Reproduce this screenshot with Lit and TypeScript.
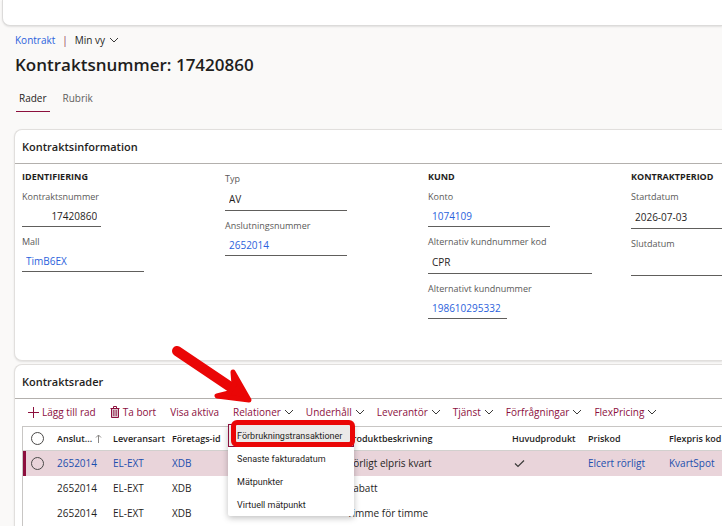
import { LitElement, html, css, nothing } from "lit";
import { customElement, state } from "lit/decorators.js";
import { classMap } from "lit/directives/class-map.js";

interface Field {
  id: string;
  label: string;
  value: string;
  kind: "text" | "link" | "number";
  size: "full" | "wide" | "short" | "rest";
}

interface Group {
  title?: string;
  fields: Field[];
}

interface Row {
  account: string;
  delivery: string;
  company: string;
  description: string;
  main: boolean;
  priceCode: string;
  flexCode: string;
}

const groups: Group[] = [
  {
    title: "IDENTIFIERING",
    fields: [
      { id: "nr", label: "Kontraktsnummer", value: "17420860", kind: "number", size: "short" },
      { id: "mall", label: "Mall", value: "TimB6EX", kind: "link", size: "full" },
    ],
  },
  {
    fields: [
      { id: "typ", label: "Typ", value: "AV", kind: "text", size: "full" },
      { id: "ansl", label: "Anslutningsnummer", value: "2652014", kind: "link", size: "full" },
    ],
  },
  {
    title: "KUND",
    fields: [
      { id: "konto", label: "Konto", value: "1074109", kind: "link", size: "full" },
      { id: "altkod", label: "Alternativ kundnummer kod", value: "CPR", kind: "text", size: "wide" },
      { id: "altnr", label: "Alternativt kundnummer", value: "198610295332", kind: "link", size: "short" },
    ],
  },
  {
    title: "KONTRAKTPERIOD",
    fields: [
      { id: "start", label: "Startdatum", value: "2026-07-03", kind: "text", size: "rest" },
      { id: "slut", label: "Slutdatum", value: "", kind: "text", size: "rest" },
    ],
  },
];

const rows: Row[] = [
  { account: "2652014", delivery: "EL-EXT", company: "XDB", description: "Rörligt elpris kvart", main: true, priceCode: "Elcert rörligt", flexCode: "KvartSpot" },
  { account: "2652014", delivery: "EL-EXT", company: "XDB", description: "Rabatt", main: false, priceCode: "", flexCode: "" },
  { account: "2652014", delivery: "EL-EXT", company: "XDB", description: "Timme för timme", main: false, priceCode: "", flexCode: "" },
];

const menuItems = ["Förbrukningstransaktioner", "Senaste fakturadatum", "Mätpunkter", "Virtuell mätpunkt"];

const chevron = html`<svg viewBox="0 0 10 10" width="10" height="10" aria-hidden="true">
  <path d="M1 3l4 4 4-4" fill="none" stroke="#3b3a39" stroke-width="1" />
</svg>`;

@customElement("app-root")
export class AppRoot extends LitElement {
  @state() private selected = 0;

  static styles = css`
    :host {
      display: block;
      min-height: 100vh;
      background: #faf9f8;
      color: #1f1e1d;
      font: 10px/16px "Open Sans", "Noto Sans", sans-serif;
      overflow: hidden;
    }
    * {
      box-sizing: border-box;
    }
    a {
      color: #2b62dc;
      text-decoration: none;
    }
    button {
      display: flex;
      align-items: center;
      padding: 0;
      border: 0;
      background: none;
      color: inherit;
      font: inherit;
      white-space: nowrap;
    }
    svg {
      display: block;
      flex: none;
    }
    .top {
      height: 26px;
      margin-left: 2px;
      background: #fff;
      border: 1px solid #dcdbda;
      border-width: 0 0 1px 1px;
      border-bottom-left-radius: 8px;
      box-shadow: 0 1px 2px #0000001a;
    }
    .crumbs {
      display: flex;
      align-items: center;
      gap: 7px;
      margin: 6px 15px 0;
    }
    .crumbs button {
      gap: 4px;
    }
    .bar {
      color: #8c3450;
    }
    h1 {
      margin: 5px 15px 0;
      font-size: 17px;
      line-height: 24px;
      font-weight: 600;
    }
    .tabs {
      display: flex;
      gap: 10px;
      margin: 13px 16px 0;
    }
    .tab {
      padding: 0 3px 5px;
      border-bottom: 1px solid transparent;
      color: #616060;
    }
    .tab.on {
      border-color: #8c0f3d;
      color: #1f1e1d;
    }
    .card {
      margin-left: 14px;
      background: #fff;
      border: 1px solid #e1dfdd;
      border-right: 0;
      border-radius: 8px 0 0 8px;
      box-shadow: 0 1px 2px #0000001a;
    }
    .info {
      margin-top: 17px;
      padding-bottom: 41px;
    }
    .lines {
      margin-top: 3px;
      border-bottom: 0;
      border-bottom-left-radius: 0;
    }
    h2 {
      margin: 0;
      padding: 8px 7px 7px;
      border-bottom: 1px solid #b3b0ad;
      font-size: 11px;
      line-height: 18px;
      font-weight: 600;
    }
    .groups {
      display: grid;
      grid-template-columns: repeat(3, 29%) 1fr;
      padding: 5px 0 0 7px;
    }
    .group {
      display: flex;
      flex-direction: column;
      gap: 7px;
    }
    .group.untitled {
      padding-top: 2px;
    }
    h3 {
      margin: 0 0 -3px;
      font-size: 9px;
      line-height: 16px;
      font-weight: 700;
      white-space: nowrap;
    }
    .field {
      display: flex;
      flex-direction: column;
    }
    .field label {
      color: #5a5958;
      font-size: 9px;
    }
    .value {
      height: 22px;
      padding: 0 4px;
      border: 0;
      border-bottom: 1px solid #605e5c;
      border-radius: 0;
      background: none;
      color: #1f1e1d;
      font: inherit;
      line-height: 20px;
      outline: 0;
    }
    .value.link {
      color: #2b62dc;
    }
    .value.text {
      height: 24px;
    }
    .value.number {
      text-align: right;
    }
    .full {
      width: 60%;
    }
    .wide {
      width: 81%;
    }
    .short {
      width: 39%;
    }
    .rest {
      width: 100%;
    }
    .toolbar {
      display: flex;
      align-items: center;
      gap: 14px;
      padding: 5px 12px 6px;
      color: #8c0f3d;
    }
    .toolbar button {
      gap: 3px;
    }
    .drops {
      display: flex;
      gap: 12px;
    }
    .drop {
      position: relative;
    }
    .menu {
      position: absolute;
      z-index: 1;
      top: 20px;
      left: -5px;
      width: 126px;
      margin: 0;
      padding: 0;
      list-style: none;
      background: #fff;
      border-radius: 2px;
      box-shadow: 0 2px 6px #00000040;
      color: #1f1e1d;
      font-family: Roboto, sans-serif;
      font-size: 9px;
    }
    .menu button {
      width: 100%;
      height: 23px;
      padding: 0 9px;
    }
    .menu .current {
      background: #ebe9e8;
      border: 1px solid #8c0f3d;
      padding: 0 8px;
    }
    .frame {
      position: absolute;
      z-index: 2;
      top: 16px;
      left: -2px;
      width: 124px;
      height: 27px;
      border: 5px solid #ea0606;
      border-radius: 6px;
    }
    .arrow {
      position: absolute;
      z-index: 2;
      right: 37px;
      bottom: 10px;
    }
    table {
      width: calc(100% - 7px);
      margin-left: 7px;
      table-layout: fixed;
      border-collapse: separate;
      border-spacing: 0;
      border: 1px solid #c8c6c4;
      border-width: 1px 0 0 1px;
    }
    th,
    td {
      height: 25px;
      padding: 0 0 2px;
      text-align: left;
      font-weight: 400;
      white-space: nowrap;
    }
    th {
      height: 24px;
      padding: 0;
      border-bottom: 1px solid #d2d0ce;
      font-size: 9px;
      font-weight: 600;
    }
    .sort {
      display: flex;
      align-items: center;
      gap: 3px;
    }
    .c-pick { width: 34px; }
    .c-account { width: 56px; }
    .c-delivery { width: 59px; }
    .c-company { width: 175px; }
    .c-desc { width: 165px; }
    .c-main { width: 76px; }
    .c-price { width: 81px; }
    .chosen td {
      background: #e9d4da;
    }
    .chosen a {
      color: #1c4fae;
    }
    .pick {
      padding: 0 0 0 8px;
    }
    .chosen .pick {
      padding-left: 5px;
      border-left: 3px solid #8c0f3d;
    }
    .pick input {
      display: block;
      appearance: none;
      width: 13px;
      height: 13px;
      margin: 0;
      border: 1px solid #4a4948;
      border-radius: 50%;
    }
  `;

  private field(f: Field) {
    const cls = classMap({ value: true, [f.kind]: true, [f.size]: true });
    return html`<div class="field">
      <label for=${f.id}>${f.label}</label>
      <input id=${f.id} class=${cls} .value=${f.value} readonly />
    </div>`;
  }

  private row(r: Row, i: number) {
    const on = i === this.selected;
    return html`<tr class=${classMap({ chosen: on })}>
      <td class="pick">
        ${on ? html`<input type="checkbox" aria-label="Välj rad" />` : nothing}
      </td>
      <td>${on ? html`<a href="#">${r.account}</a>` : r.account}</td>
      <td>${on ? html`<a href="#">${r.delivery}</a>` : r.delivery}</td>
      <td>${on ? html`<a href="#">${r.company}</a>` : r.company}</td>
      <td>${r.description}</td>
      <td>
        ${r.main
          ? html`<svg viewBox="0 0 14 10" width="14" height="10" role="img" aria-label="Ja">
              <path d="M3 5.500l3 3 6-6" fill="none" stroke="#3b3a39" stroke-width="1.200" />
            </svg>`
          : nothing}
      </td>
      <td>${r.priceCode ? html`<a href="#">${r.priceCode}</a>` : nothing}</td>
      <td>${r.flexCode ? html`<a href="#">${r.flexCode}</a>` : nothing}</td>
    </tr>`;
  }

  render() {
    return html`
      <header class="top"></header>
      <nav class="crumbs">
        <a href="#">Kontrakt</a><span class="bar">|</span>
        <button>Min vy ${chevron}</button>
      </nav>
      <h1>Kontraktsnummer: 17420860</h1>
      <nav class="tabs">
        <button class="tab on">Rader</button>
        <button class="tab">Rubrik</button>
      </nav>
      <section class="card info">
        <h2>Kontraktsinformation</h2>
        <div class="groups">
          ${groups.map(
            (g) => html`<div class=${classMap({ group: true, untitled: !g.title })}>
              ${g.title ? html`<h3>${g.title}</h3>` : nothing} ${g.fields.map((f) => this.field(f))}
            </div>`
          )}
        </div>
      </section>
      <section class="card lines">
        <h2>Kontraktsrader</h2>
        <div class="toolbar">
          <button>
            <svg viewBox="0 0 12 12" width="12" height="12" aria-hidden="true">
              <path d="M6.500 1v11M1 6.500h11" stroke="#8c0f3d" stroke-width="1" />
            </svg>
            Lägg till rad
          </button>
          <button>
            <svg viewBox="0 0 10 12" width="10" height="12" aria-hidden="true">
              <path d="M1.500 2.500h7v9h-7z" fill="#d9c3cb" />
              <path d="M.5 2.500h9M3.500 2.500v-2h3v2M1.500 2.500v9h7v-9" fill="none" stroke="#8c0f3d" stroke-width="1" />
              <path d="M3.500 4v6M5 4v6M6.500 4v6" stroke="#8c0f3d" stroke-width=".6" />
            </svg>
            Ta bort
          </button>
          <button>Visa aktiva</button>
          <div class="drops">
            <div class="drop">
              <button aria-expanded="true">Relationer ${chevron}</button>
              <ul class="menu">
                ${menuItems.map(
                  (m, i) => html`<li><button class=${classMap({ current: i === 0 })}>${m}</button></li>`
                )}
              </ul>
              <div class="frame"></div>
              <svg class="arrow" viewBox="0 0 90 66" width="90" height="66" aria-hidden="true">
                <path d="M10 7L65 44" stroke="#ea0606" stroke-width="10" stroke-linecap="round" />
                <path d="M82 56L66 28L67 41L62 49L50 52Z" fill="#ea0606" stroke="#ea0606" stroke-width="5" stroke-linejoin="round" />
              </svg>
            </div>
            ${["Underhåll", "Leverantör", "Tjänst", "Förfrågningar", "FlexPricing"].map(
              (t) => html`<button>${t} ${chevron}</button>`
            )}
          </div>
        </div>
        <table>
          <thead>
            <tr>
              <th class="pick c-pick"><input type="checkbox" aria-label="Välj alla rader" /></th>
              <th class="c-account">
                <span class="sort">Anslut...
                  <svg viewBox="0 0 7 10" width="7" height="10" aria-hidden="true">
                    <path d="M3.500 9V1M1 3.500L3.500 1L6 3.500" fill="none" stroke="#8a8886" stroke-width="1" />
                  </svg>
                </span>
              </th>
              <th class="c-delivery">Leveransart</th>
              <th class="c-company">Företags-id</th>
              <th class="c-desc">Produktbeskrivning</th>
              <th class="c-main">Huvudprodukt</th>
              <th class="c-price">Priskod</th>
              <th>Flexpris kod</th>
            </tr>
          </thead>
          <tbody>
            ${rows.map((r, i) => this.row(r, i))}
          </tbody>
        </table>
      </section>
    `;
  }
}
